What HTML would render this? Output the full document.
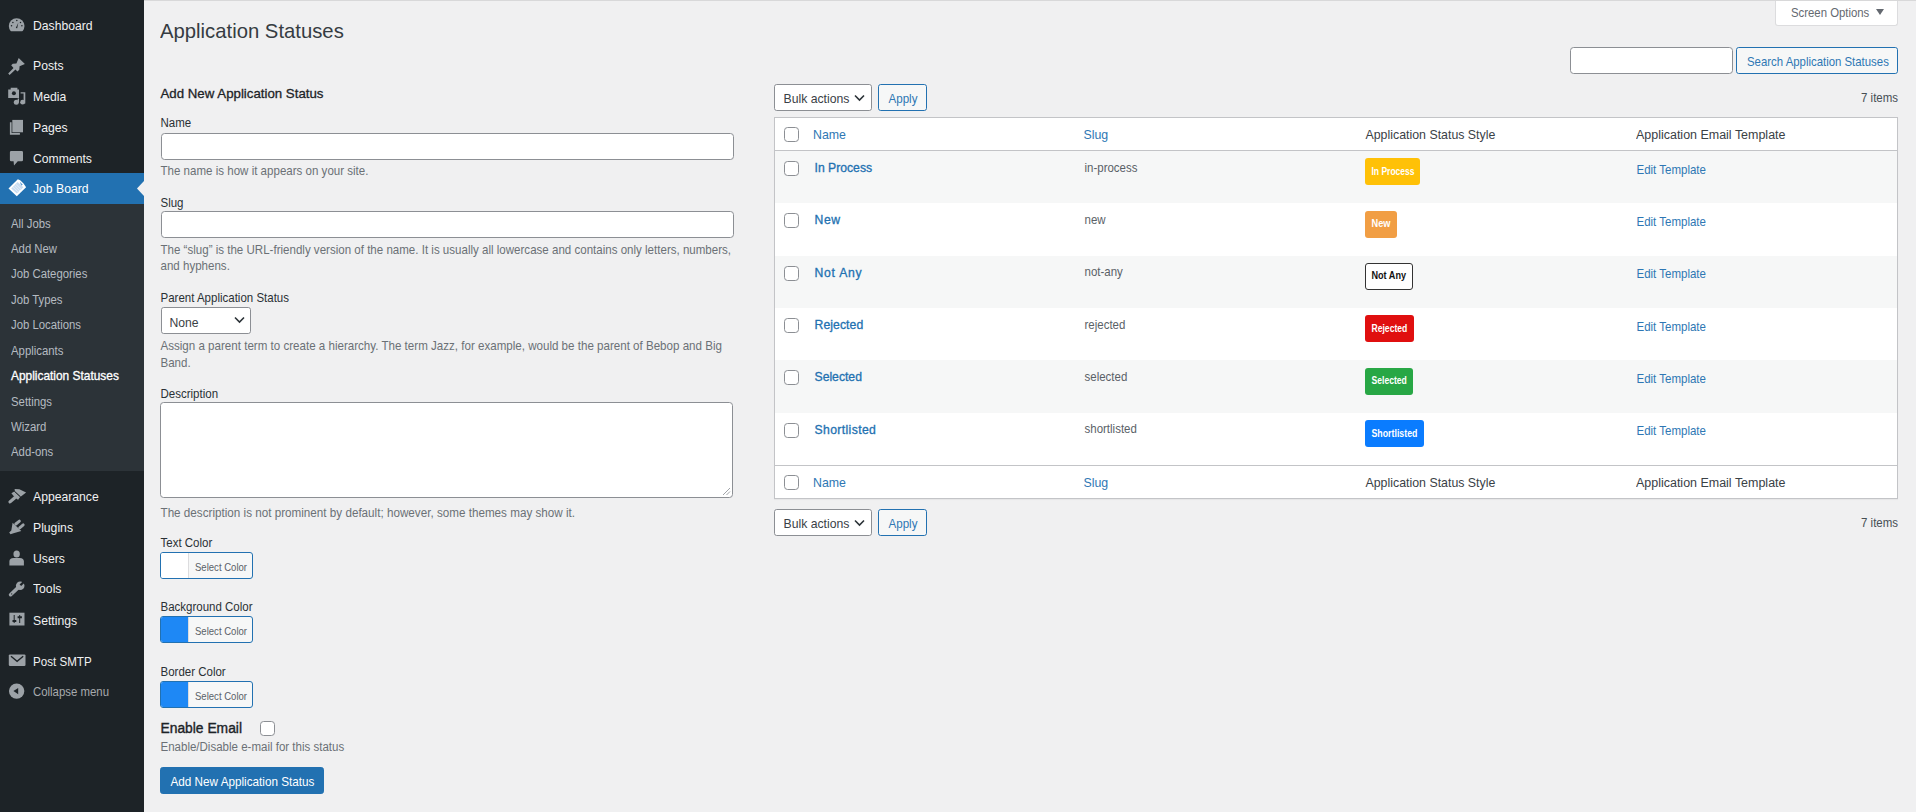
<!DOCTYPE html>
<html><head><meta charset="utf-8"><title>Application Statuses</title>
<style>
html,body{margin:0;padding:0}
body{width:1916px;height:812px;overflow:hidden;position:relative;background:#f0f0f1;font-family:"Liberation Sans",sans-serif}
.t{position:absolute;white-space:nowrap}
</style></head><body>
<div style="position:absolute;left:0px;top:0px;width:144px;height:812px;background:#1d2327"></div>
<div style="position:absolute;left:0px;top:173px;width:144px;height:31px;background:#2271b1"></div>
<div style="position:absolute;left:0px;top:204px;width:144px;height:267px;background:#2c3338"></div>
<svg style="position:absolute;left:130px;top:173px" width="14" height="31" viewBox="130 173 14 31"><path d="M137 188.5 L144 181 L144 196z" fill="#f0f0f1"/></svg>
<div class="t" style="left:33px;top:19.17px;font-size:12.2px;line-height:12.2px;color:#f0f0f1;font-weight:400;transform:scaleY(1.06);transform-origin:0 1.59px;">Dashboard</div>
<div class="t" style="left:33px;top:59.07px;font-size:12.2px;line-height:12.2px;color:#f0f0f1;font-weight:400;transform:scaleY(1.06);transform-origin:0 1.59px;">Posts</div>
<div class="t" style="left:33px;top:90.27px;font-size:12.2px;line-height:12.2px;color:#f0f0f1;font-weight:400;transform:scaleY(1.06);transform-origin:0 1.59px;">Media</div>
<div class="t" style="left:33px;top:120.87px;font-size:12.2px;line-height:12.2px;color:#f0f0f1;font-weight:400;transform:scaleY(1.06);transform-origin:0 1.59px;">Pages</div>
<div class="t" style="left:33px;top:151.97px;font-size:12.2px;line-height:12.2px;color:#f0f0f1;font-weight:400;transform:scaleY(1.06);transform-origin:0 1.59px;">Comments</div>
<div class="t" style="left:33px;top:182.07px;font-size:12.2px;line-height:12.2px;color:#fff;font-weight:400;transform:scaleY(1.06);transform-origin:0 1.59px;">Job Board</div>
<div class="t" style="left:33px;top:490.17px;font-size:12.2px;line-height:12.2px;color:#f0f0f1;font-weight:400;transform:scaleY(1.06);transform-origin:0 1.59px;">Appearance</div>
<div class="t" style="left:33px;top:520.87px;font-size:12.2px;line-height:12.2px;color:#f0f0f1;font-weight:400;transform:scaleY(1.06);transform-origin:0 1.59px;">Plugins</div>
<div class="t" style="left:33px;top:552.27px;font-size:12.2px;line-height:12.2px;color:#f0f0f1;font-weight:400;transform:scaleY(1.06);transform-origin:0 1.59px;">Users</div>
<div class="t" style="left:33px;top:582.17px;font-size:12.2px;line-height:12.2px;color:#f0f0f1;font-weight:400;transform:scaleY(1.06);transform-origin:0 1.59px;">Tools</div>
<div class="t" style="left:33px;top:613.67px;font-size:12.2px;line-height:12.2px;color:#f0f0f1;font-weight:400;transform:scaleY(1.06);transform-origin:0 1.59px;">Settings</div>
<div class="t" style="left:33px;top:654.68px;font-size:11.6px;line-height:11.6px;color:#f0f0f1;font-weight:400;transform:scaleY(1.12);transform-origin:0 1.51px;">Post SMTP</div>
<div class="t" style="left:33px;top:686.25px;font-size:11.4px;line-height:11.4px;color:#a7aaad;font-weight:400;transform:scaleY(1.12);transform-origin:0 1.49px;">Collapse menu</div>
<div class="t" style="left:11px;top:217.99px;font-size:11.35px;line-height:11.35px;color:#b5bbc1;font-weight:400;transform:scaleY(1.12);transform-origin:0 1.48px;">All Jobs</div>
<div class="t" style="left:11px;top:242.99px;font-size:11.35px;line-height:11.35px;color:#b5bbc1;font-weight:400;transform:scaleY(1.12);transform-origin:0 1.48px;">Add New</div>
<div class="t" style="left:11px;top:268.29px;font-size:11.35px;line-height:11.35px;color:#b5bbc1;font-weight:400;transform:scaleY(1.12);transform-origin:0 1.48px;">Job Categories</div>
<div class="t" style="left:11px;top:293.89px;font-size:11.35px;line-height:11.35px;color:#b5bbc1;font-weight:400;transform:scaleY(1.12);transform-origin:0 1.48px;">Job Types</div>
<div class="t" style="left:11px;top:318.89px;font-size:11.35px;line-height:11.35px;color:#b5bbc1;font-weight:400;transform:scaleY(1.12);transform-origin:0 1.48px;">Job Locations</div>
<div class="t" style="left:11px;top:345.19px;font-size:11.35px;line-height:11.35px;color:#b5bbc1;font-weight:400;transform:scaleY(1.12);transform-origin:0 1.48px;">Applicants</div>
<div class="t" style="left:11px;top:371.41px;font-size:11.92px;line-height:11.92px;color:#fff;font-weight:400;-webkit-text-stroke:0.3px #fff;">Application Statuses</div>
<div class="t" style="left:11px;top:395.59px;font-size:11.35px;line-height:11.35px;color:#b5bbc1;font-weight:400;transform:scaleY(1.12);transform-origin:0 1.48px;">Settings</div>
<div class="t" style="left:11px;top:421.09px;font-size:11.35px;line-height:11.35px;color:#b5bbc1;font-weight:400;transform:scaleY(1.12);transform-origin:0 1.48px;">Wizard</div>
<div class="t" style="left:11px;top:446.39px;font-size:11.35px;line-height:11.35px;color:#b5bbc1;font-weight:400;transform:scaleY(1.12);transform-origin:0 1.48px;">Add-ons</div>
<svg style="position:absolute;left:4px;top:12px" width="26" height="26" viewBox="0 0 26 26"><clipPath id="cg"><rect x="0" y="0" width="26" height="19.3"/></clipPath><circle cx="12.65" cy="14.1" r="7.85" fill="#9ca2a7" clip-path="url(#cg)"/><g fill="#1d2327"><circle cx="12.8" cy="8.6" r=".75"/><circle cx="8.9" cy="10.4" r=".75"/><circle cx="16.5" cy="10.4" r=".75"/><circle cx="7.5" cy="13.8" r=".75"/><circle cx="17.9" cy="13.8" r=".75"/><path d="M11.8 15.9 L14.3 10.8 L13.2 16.3z"/></g></svg>
<svg style="position:absolute;left:4px;top:52px" width="26" height="26" viewBox="0 0 26 26"><path d="M4.2 21.6 L9.5 15.9 L7.2 13.3 L8.8 11.8 L12.4 11.5 L14.7 6.0 L20.9 11.9 L15.6 14.3 L15.3 17.7 L13.4 19.4 L11.5 17.5 L5.6 22.9z" fill="#9ca2a7"/></svg>
<svg style="position:absolute;left:4px;top:84px" width="26" height="26" viewBox="0 0 26 26"><path d="M4.2 5.4 H6.7 V3.8 H13.4 V5.4 H15 V14.1 H4.2z" fill="#9ca2a7"/><circle cx="9.9" cy="9.3" r="2" fill="#1d2327"/><path d="M16.6 8.2 H21.3 V19.5 H19.6 V9.6 H16.6z" fill="#9ca2a7"/><circle cx="18.6" cy="18.2" r="2.4" fill="#9ca2a7"/><path d="M13.6 14.6 H15 V18.4 H13.6z" fill="#9ca2a7"/><circle cx="12.3" cy="18.2" r="2.5" fill="#9ca2a7"/></svg>
<svg style="position:absolute;left:4px;top:114px" width="26" height="26" viewBox="0 0 26 26"><path d="M8.3 5.9 H19 V18.3 H8.3z" fill="#9ca2a7"/><path d="M5.9 8.3 H7.6 V19 H15.9 V20.7 H5.9z" fill="#9ca2a7"/></svg>
<svg style="position:absolute;left:4px;top:150px" width="26" height="26" viewBox="0 0 26 26"><path d="M7.2 0.9 H17.7 Q19 0.9 19 2.2 V9.9 Q19 11.2 17.7 11.2 H13.8 L10 15.4 L9.6 11.2 H7.2 Q5.9 11.2 5.9 9.9 V2.2 Q5.9 0.9 7.2 0.9z" fill="#9ca2a7"/></svg>
<svg style="position:absolute;left:4px;top:176px" width="26" height="26" viewBox="0 0 26 26"><path d="M4.5 12.5 L13.8 3.2 L16.2 4.2 L19.5 7.5 L22.1 11.2 L12.8 20.2z" fill="#fff"/><path d="M7.2 12.5 L13.6 6.1 L19.4 11.3 L12.8 17.6z" fill="#c9ddf1"/><path d="M9 11.2 L15.2 17 M10.5 9.8 L16.6 15.6 M12 8.4 L18 14.2" stroke="#eef5fc" stroke-width=".7"/><path d="M15.8 5.8 L18.8 8.8 L17.2 9.6z" fill="#5d9bd0"/></svg>
<svg style="position:absolute;left:4px;top:484px" width="26" height="26" viewBox="0 0 26 26"><path d="M10.6 5.1 L15.4 5.3 L22.1 8.5 L16.6 12.8 L10.9 7.6z" fill="#9ca2a7"/><path d="M7.4 9.3 L10.3 7.6 L16.1 12.9 L14.1 15.7 L11.2 14.1z" fill="#9ca2a7"/><path d="M10.5 14 L6 17.9" stroke="#9ca2a7" stroke-width="3.2" stroke-linecap="round"/><path d="M10.4 7.2 L16.6 12.9" stroke="#1d2327" stroke-width=".9"/></svg>
<svg style="position:absolute;left:4px;top:515px" width="26" height="26" viewBox="0 0 26 26"><path d="M8.6 7.7 L17.3 16 L9.5 18.3 L6.5 19.2 L5.2 17.6 L7.3 15.6z" fill="#9ca2a7"/><path d="M11.8 9 L15.4 6.1 M15.7 12.8 L19.2 9.9" stroke="#9ca2a7" stroke-width="2.9" stroke-linecap="round"/></svg>
<svg style="position:absolute;left:4px;top:545px" width="26" height="26" viewBox="0 0 26 26"><ellipse cx="12.65" cy="9" rx="3.2" ry="3.5" fill="#9ca2a7"/><path d="M5.4 20.5 V16.5 Q5.4 12.9 9.5 12.9 H15.8 Q19.9 12.9 19.9 16.5 V20.5z" fill="#9ca2a7"/></svg>
<svg style="position:absolute;left:4px;top:576px" width="26" height="26" viewBox="0 0 26 26"><path d="M6.6 18.7 L13.8 11.9" stroke="#9ca2a7" stroke-width="3.6" stroke-linecap="round"/><circle cx="16.2" cy="9.8" r="4.3" fill="#9ca2a7"/><path d="M16.4 9.3 L20.2 5.5" stroke="#1d2327" stroke-width="2.3" stroke-linecap="butt"/><circle cx="7.7" cy="17.9" r=".6" fill="#1d2327"/></svg>
<svg style="position:absolute;left:4px;top:606px" width="26" height="26" viewBox="0 0 26 26"><rect x="5.4" y="6.7" width="15.1" height="12.8" fill="#9ca2a7"/><path d="M10.2 9 V17 M15.7 9 V17" stroke="#1d2327" stroke-width="1"/><path d="M8.5 15 H12.3 M13.6 11.2 H17.9" stroke="#1d2327" stroke-width="2"/></svg>
<svg style="position:absolute;left:4px;top:647px" width="26" height="26" viewBox="0 0 26 26"><rect x="4.8" y="7.4" width="16.7" height="11.5" rx="1.2" fill="#9ca2a7"/><path d="M7 9.3 L13.1 14.3 L19.2 9.3" stroke="#1d2327" stroke-width="1.4" fill="none"/></svg>
<svg style="position:absolute;left:4px;top:678px" width="26" height="26" viewBox="0 0 26 26"><circle cx="12.65" cy="13.1" r="7.7" fill="#9ca2a7"/><path d="M9.4 13.1 L14.2 10 V16.2z" fill="#1d2327"/></svg>
<div style="position:absolute;left:144px;top:0px;width:1772px;height:1px;background:#d8d8d9"></div>
<div class="t" style="left:160px;top:19.72px;font-size:20.3px;line-height:20.3px;color:#363c42;font-weight:400;transform:scaleY(1.04);transform-origin:0 2.65px;">Application Statuses</div>
<div style="position:absolute;left:1775px;top:1px;width:121px;height:24px;background:#fff;border:1px solid #dcdcde;border-top:none;border-radius:0 0 3px 3px"></div>
<div class="t" style="left:1791px;top:6.58px;font-size:11.37px;line-height:11.37px;color:#646970;font-weight:400;transform:scaleY(1.12);transform-origin:0 1.48px;">Screen Options</div>
<div style="position:absolute;left:1876px;top:9px;width:0;height:0;border-left:4px solid transparent;border-right:4px solid transparent;border-top:6px solid #646970"></div>
<div style="position:absolute;left:1570px;top:47px;width:161px;height:25px;background:#fff;border:1px solid #8c8f94;border-radius:3.6px"></div>
<div style="position:absolute;left:1736px;top:47px;width:160px;height:25px;background:#f6f7f7;border:1px solid #2271b1;border-radius:2.7px"></div>
<div class="t" style="left:1747px;top:55.75px;font-size:11.4px;line-height:11.4px;color:#2e77b4;font-weight:400;transform:scaleY(1.12);transform-origin:0 1.49px;">Search Application Statuses</div>
<div class="t" style="right:18px;top:91.58px;font-size:11.48px;line-height:11.48px;color:#474e54;font-weight:400;transform:scaleY(1.12);transform-origin:0 1.50px;">7 items</div>
<div class="t" style="right:18px;top:516.58px;font-size:11.48px;line-height:11.48px;color:#474e54;font-weight:400;transform:scaleY(1.12);transform-origin:0 1.50px;">7 items</div>
<div class="t" style="left:160.5px;top:87.07px;font-size:13.27px;line-height:13.27px;color:#1d2327;font-weight:400;-webkit-text-stroke:0.3px #1d2327;">Add New Application Status</div>
<div class="t" style="left:160.5px;top:117.17px;font-size:11.5px;line-height:11.5px;color:#2a3035;font-weight:400;transform:scaleY(1.12);transform-origin:0 1.50px;">Name</div>
<div style="position:absolute;left:161px;top:133px;width:571px;height:25px;background:#fff;border:1px solid #8c8f94;border-radius:3.6px"></div>
<div class="t" style="left:160.5px;top:165.42px;font-size:11.55px;line-height:11.55px;color:#6b7076;font-weight:400;transform:scaleY(1.12);transform-origin:0 1.51px;">The name is how it appears on your site.</div>
<div class="t" style="left:160.5px;top:196.67px;font-size:11.5px;line-height:11.5px;color:#2a3035;font-weight:400;transform:scaleY(1.12);transform-origin:0 1.50px;">Slug</div>
<div style="position:absolute;left:161px;top:211px;width:571px;height:25px;background:#fff;border:1px solid #8c8f94;border-radius:3.6px"></div>
<div class="t" style="left:160.5px;top:243.82px;font-size:11.55px;line-height:11.55px;color:#6b7076;font-weight:400;transform:scaleY(1.12);transform-origin:0 1.51px;">The “slug” is the URL-friendly version of the name. It is usually all lowercase and contains only letters, numbers,</div>
<div class="t" style="left:160.5px;top:260.42px;font-size:11.55px;line-height:11.55px;color:#6b7076;font-weight:400;transform:scaleY(1.12);transform-origin:0 1.51px;">and hyphens.</div>
<div class="t" style="left:160.5px;top:291.86px;font-size:11.51px;line-height:11.51px;color:#2a3035;font-weight:400;transform:scaleY(1.12);transform-origin:0 1.50px;">Parent Application Status</div>
<div style="position:absolute;left:161px;top:307px;width:88px;height:25px;background:#fff;border:1px solid #8c8f94;border-radius:2.7px"></div>
<div class="t" style="left:169.5px;top:316.17px;font-size:12.2px;line-height:12.2px;color:#3a4146;font-weight:400;transform:scaleY(1.06);transform-origin:0 1.59px;">None</div>
<svg style="position:absolute;left:234px;top:316px" width="11" height="8" viewBox="0 0 11 8"><path d="M1 1.5 L5.5 6 L10 1.5" stroke="#2c3338" stroke-width="1.6" fill="none"/></svg>
<div class="t" style="left:160.5px;top:340.00px;font-size:11.58px;line-height:11.58px;color:#6b7076;font-weight:400;transform:scaleY(1.12);transform-origin:0 1.51px;">Assign a parent term to create a hierarchy. The term Jazz, for example, would be the parent of Bebop and Big</div>
<div class="t" style="left:160.5px;top:356.62px;font-size:11.55px;line-height:11.55px;color:#6b7076;font-weight:400;transform:scaleY(1.12);transform-origin:0 1.51px;">Band.</div>
<div class="t" style="left:160.5px;top:387.67px;font-size:11.5px;line-height:11.5px;color:#2a3035;font-weight:400;transform:scaleY(1.12);transform-origin:0 1.50px;">Description</div>
<div style="position:absolute;left:160px;top:402px;width:571px;height:94px;background:#fff;border:1px solid #8c8f94;border-radius:3.6px"></div>
<svg style="position:absolute;left:721px;top:486px" width="10" height="10" viewBox="0 0 10 10"><path d="M9 2 L2 9 M9 5.5 L5.5 9" stroke="#a0a3a8" stroke-width="1" fill="none"/></svg>
<div class="t" style="left:160.5px;top:506.31px;font-size:11.68px;line-height:11.68px;color:#6b7076;font-weight:400;transform:scaleY(1.12);transform-origin:0 1.52px;">The description is not prominent by default; however, some themes may show it.</div>
<div class="t" style="left:160.5px;top:537.37px;font-size:11.5px;line-height:11.5px;color:#2a3035;font-weight:400;transform:scaleY(1.12);transform-origin:0 1.50px;">Text Color</div>
<div style="position:absolute;left:160px;top:552px;width:91px;height:25px;background:#f6f7f7;border:1px solid #2271b1;border-radius:3px;overflow:hidden"><div style="position:absolute;left:0;top:0;width:27px;height:25px;background:#ffffff;border-right:1px solid #dcdcde"></div></div>
<div class="t" style="left:195px;top:562.22px;font-size:9.55px;line-height:9.55px;color:#5a6167;font-weight:400;transform:scaleY(1.12);transform-origin:0 1.25px;">Select Color</div>
<div class="t" style="left:160.5px;top:601.37px;font-size:11.5px;line-height:11.5px;color:#2a3035;font-weight:400;transform:scaleY(1.12);transform-origin:0 1.50px;">Background Color</div>
<div style="position:absolute;left:160px;top:616px;width:91px;height:25px;background:#f6f7f7;border:1px solid #2271b1;border-radius:3px;overflow:hidden"><div style="position:absolute;left:0;top:0;width:27px;height:25px;background:#1e88f5;border-right:1px solid #dcdcde"></div></div>
<div class="t" style="left:195px;top:626.22px;font-size:9.55px;line-height:9.55px;color:#5a6167;font-weight:400;transform:scaleY(1.12);transform-origin:0 1.25px;">Select Color</div>
<div class="t" style="left:160.5px;top:665.87px;font-size:11.5px;line-height:11.5px;color:#2a3035;font-weight:400;transform:scaleY(1.12);transform-origin:0 1.50px;">Border Color</div>
<div style="position:absolute;left:160px;top:681px;width:91px;height:25px;background:#f6f7f7;border:1px solid #2271b1;border-radius:3px;overflow:hidden"><div style="position:absolute;left:0;top:0;width:27px;height:25px;background:#1e88f5;border-right:1px solid #dcdcde"></div></div>
<div class="t" style="left:195px;top:691.22px;font-size:9.55px;line-height:9.55px;color:#5a6167;font-weight:400;transform:scaleY(1.12);transform-origin:0 1.25px;">Select Color</div>
<div class="t" style="left:160.5px;top:722.29px;font-size:13.83px;line-height:13.83px;color:#1d2327;font-weight:400;-webkit-text-stroke:0.38px #1d2327;">Enable Email</div>
<div style="position:absolute;left:260px;top:721px;width:13px;height:13px;background:#fff;border:1px solid #8c8f94;border-radius:3.6px"></div>
<div class="t" style="left:160.5px;top:741.44px;font-size:11.53px;line-height:11.53px;color:#6b7076;font-weight:400;transform:scaleY(1.12);transform-origin:0 1.50px;">Enable/Disable e-mail for this status</div>
<div style="position:absolute;left:160px;top:767px;width:162px;height:25px;background:#2271b1;border:1px solid #2271b1;border-radius:2.7px"></div>
<div class="t" style="left:170.5px;top:774.88px;font-size:11.72px;line-height:11.72px;color:#fff;font-weight:400;transform:scaleY(1.12);transform-origin:0 1.53px;">Add New Application Status</div>
<div style="position:absolute;left:774px;top:84px;width:96px;height:25px;background:#fff;border:1px solid #8c8f94;border-radius:2.7px"></div>
<div class="t" style="left:783.5px;top:91.94px;font-size:12.24px;line-height:12.24px;color:#3a4146;font-weight:400;transform:scaleY(1.06);transform-origin:0 1.60px;">Bulk actions</div>
<svg style="position:absolute;left:854px;top:94px" width="11" height="8" viewBox="0 0 11 8"><path d="M1 1.5 L5.5 6 L10 1.5" stroke="#2c3338" stroke-width="1.6" fill="none"/></svg>
<div style="position:absolute;left:878px;top:84px;width:47px;height:25px;background:#f6f7f7;border:1px solid #2271b1;border-radius:2.7px"></div>
<div class="t" style="left:888.5px;top:92.59px;font-size:11.59px;line-height:11.59px;color:#2e77b4;font-weight:400;transform:scaleY(1.12);transform-origin:0 1.51px;">Apply</div>
<div style="position:absolute;left:774px;top:509px;width:96px;height:25px;background:#fff;border:1px solid #8c8f94;border-radius:2.7px"></div>
<div class="t" style="left:783.5px;top:516.94px;font-size:12.24px;line-height:12.24px;color:#3a4146;font-weight:400;transform:scaleY(1.06);transform-origin:0 1.60px;">Bulk actions</div>
<svg style="position:absolute;left:854px;top:519px" width="11" height="8" viewBox="0 0 11 8"><path d="M1 1.5 L5.5 6 L10 1.5" stroke="#2c3338" stroke-width="1.6" fill="none"/></svg>
<div style="position:absolute;left:878px;top:509px;width:47px;height:25px;background:#f6f7f7;border:1px solid #2271b1;border-radius:2.7px"></div>
<div class="t" style="left:888.5px;top:517.59px;font-size:11.59px;line-height:11.59px;color:#2e77b4;font-weight:400;transform:scaleY(1.12);transform-origin:0 1.51px;">Apply</div>
<div style="position:absolute;left:774px;top:117px;width:1122px;height:380px;background:#fff;border:1px solid #c3c4c7;box-shadow:0 1px 1px rgba(0,0,0,.04)"></div>
<div style="position:absolute;left:775px;top:150px;width:1122px;height:1px;background:#c3c4c7"></div>
<div style="position:absolute;left:775px;top:151px;width:1122px;height:52px;background:#f6f7f7"></div>
<div style="position:absolute;left:775px;top:256px;width:1122px;height:52px;background:#f6f7f7"></div>
<div style="position:absolute;left:775px;top:360px;width:1122px;height:53px;background:#f6f7f7"></div>
<div style="position:absolute;left:784px;top:161px;width:13px;height:13px;background:#fff;border:1px solid #8c8f94;border-radius:3.6px"></div>
<div class="t" style="left:814.5px;top:161.97px;font-size:12.2px;line-height:12.2px;color:#2271b1;font-weight:400;transform:scaleY(1.04);transform-origin:0 1.59px;letter-spacing:0px;-webkit-text-stroke:0.3px #2271b1;">In Process</div>
<div class="t" style="left:1084.5px;top:161.77px;font-size:11.49px;line-height:11.49px;color:#5a6167;font-weight:400;transform:scaleY(1.12);transform-origin:0 1.50px;">in-process</div>
<div style="position:absolute;left:1365px;top:158px;width:55px;height:27px;background:#ffc107;border-radius:3px"></div>
<div class="t" style="left:1371.5px;top:167.20px;font-size:8.5px;line-height:8.5px;color:#fff;font-weight:700;transform:scaleY(1.2);transform-origin:0 1.11px;">In Process</div>
<div class="t" style="left:1636.5px;top:163.56px;font-size:11.51px;line-height:11.51px;color:#2e77b4;font-weight:400;transform:scaleY(1.12);transform-origin:0 1.50px;">Edit Template</div>
<div style="position:absolute;left:784px;top:213px;width:13px;height:13px;background:#fff;border:1px solid #8c8f94;border-radius:3.6px"></div>
<div class="t" style="left:814.5px;top:214.30px;font-size:12.2px;line-height:12.2px;color:#2271b1;font-weight:400;transform:scaleY(1.04);transform-origin:0 1.59px;letter-spacing:0.6px;-webkit-text-stroke:0.3px #2271b1;">New</div>
<div class="t" style="left:1084.5px;top:214.10px;font-size:11.49px;line-height:11.49px;color:#5a6167;font-weight:400;transform:scaleY(1.12);transform-origin:0 1.50px;">new</div>
<div style="position:absolute;left:1365px;top:211px;width:32px;height:27px;background:#f19e44;border-radius:3px"></div>
<div class="t" style="left:1371.5px;top:218.94px;font-size:9.2px;line-height:9.2px;color:#fff;font-weight:700;transform:scaleY(1.2);transform-origin:0 1.20px;">New</div>
<div class="t" style="left:1636.5px;top:215.89px;font-size:11.51px;line-height:11.51px;color:#2e77b4;font-weight:400;transform:scaleY(1.12);transform-origin:0 1.50px;">Edit Template</div>
<div style="position:absolute;left:784px;top:266px;width:13px;height:13px;background:#fff;border:1px solid #8c8f94;border-radius:3.6px"></div>
<div class="t" style="left:814.5px;top:266.63px;font-size:12.2px;line-height:12.2px;color:#2271b1;font-weight:400;transform:scaleY(1.04);transform-origin:0 1.59px;letter-spacing:0.75px;-webkit-text-stroke:0.3px #2271b1;">Not Any</div>
<div class="t" style="left:1084.5px;top:266.43px;font-size:11.49px;line-height:11.49px;color:#5a6167;font-weight:400;transform:scaleY(1.12);transform-origin:0 1.50px;">not-any</div>
<div style="position:absolute;left:1365px;top:263px;width:46px;height:25px;background:#fff;border:1px solid #333;border-radius:3px"></div>
<div class="t" style="left:1371.5px;top:271.36px;font-size:9.1px;line-height:9.1px;color:#111;font-weight:700;transform:scaleY(1.2);transform-origin:0 1.19px;">Not Any</div>
<div class="t" style="left:1636.5px;top:268.22px;font-size:11.51px;line-height:11.51px;color:#2e77b4;font-weight:400;transform:scaleY(1.12);transform-origin:0 1.50px;">Edit Template</div>
<div style="position:absolute;left:784px;top:318px;width:13px;height:13px;background:#fff;border:1px solid #8c8f94;border-radius:3.6px"></div>
<div class="t" style="left:814.5px;top:318.96px;font-size:12.2px;line-height:12.2px;color:#2271b1;font-weight:400;transform:scaleY(1.04);transform-origin:0 1.59px;letter-spacing:0.08px;-webkit-text-stroke:0.3px #2271b1;">Rejected</div>
<div class="t" style="left:1084.5px;top:318.76px;font-size:11.49px;line-height:11.49px;color:#5a6167;font-weight:400;transform:scaleY(1.12);transform-origin:0 1.50px;">rejected</div>
<div style="position:absolute;left:1365px;top:315px;width:49px;height:27px;background:#e00f0f;border-radius:3px"></div>
<div class="t" style="left:1371.5px;top:324.11px;font-size:8.6px;line-height:8.6px;color:#fff;font-weight:700;transform:scaleY(1.2);transform-origin:0 1.12px;">Rejected</div>
<div class="t" style="left:1636.5px;top:320.55px;font-size:11.51px;line-height:11.51px;color:#2e77b4;font-weight:400;transform:scaleY(1.12);transform-origin:0 1.50px;">Edit Template</div>
<div style="position:absolute;left:784px;top:370px;width:13px;height:13px;background:#fff;border:1px solid #8c8f94;border-radius:3.6px"></div>
<div class="t" style="left:814.5px;top:371.29px;font-size:12.2px;line-height:12.2px;color:#2271b1;font-weight:400;transform:scaleY(1.04);transform-origin:0 1.59px;letter-spacing:0px;-webkit-text-stroke:0.3px #2271b1;">Selected</div>
<div class="t" style="left:1084.5px;top:371.09px;font-size:11.49px;line-height:11.49px;color:#5a6167;font-weight:400;transform:scaleY(1.12);transform-origin:0 1.50px;">selected</div>
<div style="position:absolute;left:1365px;top:368px;width:48px;height:27px;background:#28a745;border-radius:3px"></div>
<div class="t" style="left:1371.5px;top:376.44px;font-size:8.6px;line-height:8.6px;color:#fff;font-weight:700;transform:scaleY(1.2);transform-origin:0 1.12px;">Selected</div>
<div class="t" style="left:1636.5px;top:372.88px;font-size:11.51px;line-height:11.51px;color:#2e77b4;font-weight:400;transform:scaleY(1.12);transform-origin:0 1.50px;">Edit Template</div>
<div style="position:absolute;left:784px;top:423px;width:13px;height:13px;background:#fff;border:1px solid #8c8f94;border-radius:3.6px"></div>
<div class="t" style="left:814.5px;top:423.62px;font-size:12.2px;line-height:12.2px;color:#2271b1;font-weight:400;transform:scaleY(1.04);transform-origin:0 1.59px;letter-spacing:0.38px;-webkit-text-stroke:0.3px #2271b1;">Shortlisted</div>
<div class="t" style="left:1084.5px;top:423.42px;font-size:11.49px;line-height:11.49px;color:#5a6167;font-weight:400;transform:scaleY(1.12);transform-origin:0 1.50px;">shortlisted</div>
<div style="position:absolute;left:1365px;top:420px;width:59px;height:27px;background:#0a7cff;border-radius:3px"></div>
<div class="t" style="left:1371.5px;top:428.60px;font-size:8.8px;line-height:8.8px;color:#fff;font-weight:700;transform:scaleY(1.2);transform-origin:0 1.15px;">Shortlisted</div>
<div class="t" style="left:1636.5px;top:425.21px;font-size:11.51px;line-height:11.51px;color:#2e77b4;font-weight:400;transform:scaleY(1.12);transform-origin:0 1.50px;">Edit Template</div>
<div style="position:absolute;left:784px;top:127px;width:13px;height:13px;background:#fff;border:1px solid #8c8f94;border-radius:3.6px"></div>
<div class="t" style="left:813px;top:128.03px;font-size:12.37px;line-height:12.37px;color:#2e77b4;font-weight:400;transform:scaleY(1.06);transform-origin:0 1.61px;">Name</div>
<div class="t" style="left:1083.5px;top:128.03px;font-size:12.37px;line-height:12.37px;color:#2e77b4;font-weight:400;transform:scaleY(1.06);transform-origin:0 1.61px;">Slug</div>
<div class="t" style="left:1365.5px;top:128.03px;font-size:12.37px;line-height:12.37px;color:#3a4146;font-weight:400;transform:scaleY(1.06);transform-origin:0 1.61px;">Application Status Style</div>
<div class="t" style="left:1636px;top:127.94px;font-size:12.48px;line-height:12.48px;color:#3a4146;font-weight:400;transform:scaleY(1.06);transform-origin:0 1.63px;">Application Email Template</div>
<div style="position:absolute;left:775px;top:465px;width:1122px;height:1px;background:#c3c4c7"></div>
<div style="position:absolute;left:784px;top:475px;width:13px;height:13px;background:#fff;border:1px solid #8c8f94;border-radius:3.6px"></div>
<div class="t" style="left:813px;top:476.43px;font-size:12.37px;line-height:12.37px;color:#2e77b4;font-weight:400;transform:scaleY(1.06);transform-origin:0 1.61px;">Name</div>
<div class="t" style="left:1083.5px;top:476.43px;font-size:12.37px;line-height:12.37px;color:#2e77b4;font-weight:400;transform:scaleY(1.06);transform-origin:0 1.61px;">Slug</div>
<div class="t" style="left:1365.5px;top:476.43px;font-size:12.37px;line-height:12.37px;color:#3a4146;font-weight:400;transform:scaleY(1.06);transform-origin:0 1.61px;">Application Status Style</div>
<div class="t" style="left:1636px;top:476.34px;font-size:12.48px;line-height:12.48px;color:#3a4146;font-weight:400;transform:scaleY(1.06);transform-origin:0 1.63px;">Application Email Template</div>
</body></html>
